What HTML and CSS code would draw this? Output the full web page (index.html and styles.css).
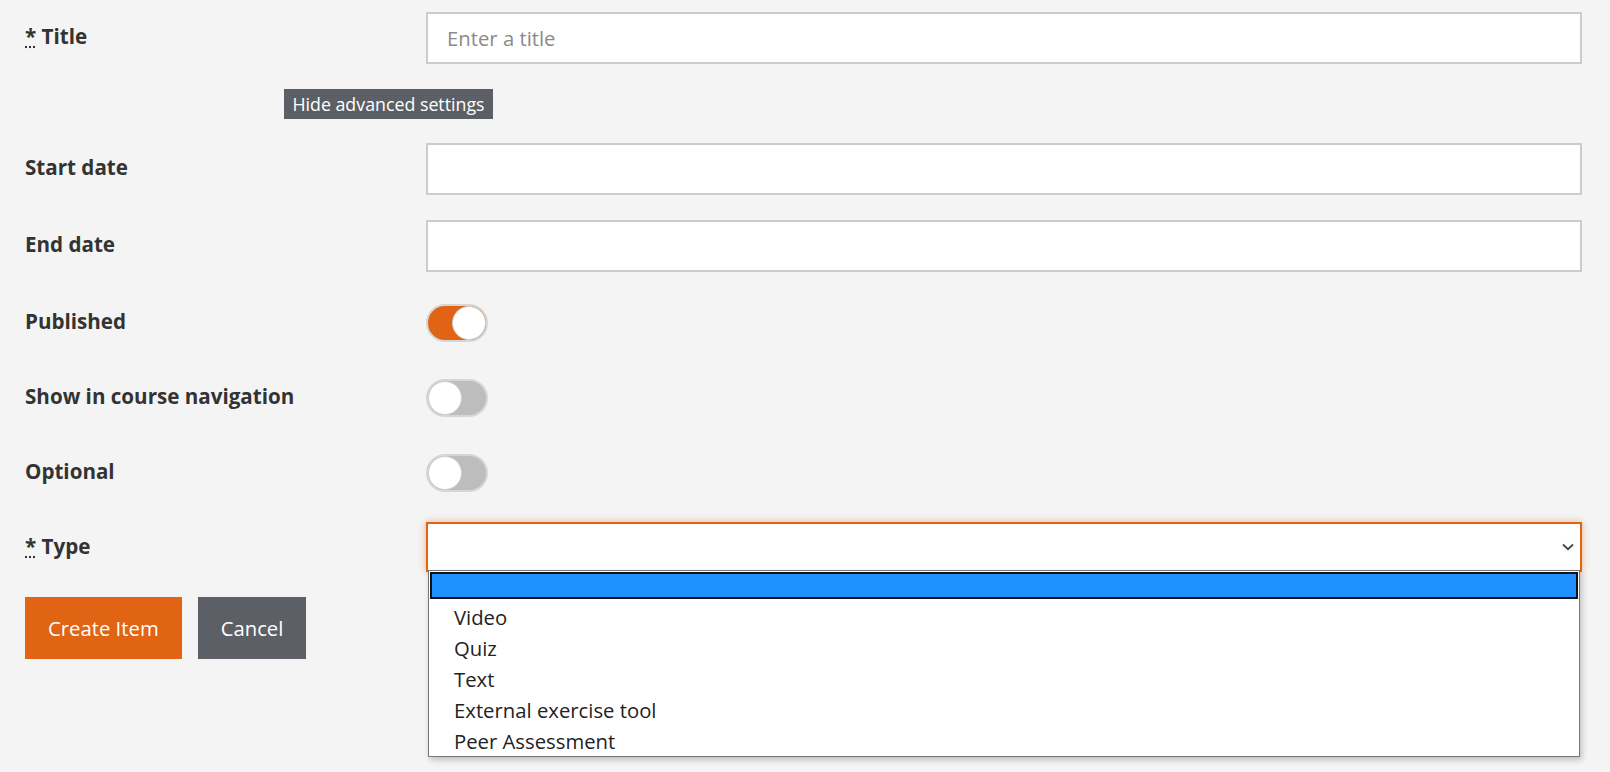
FILE: index.html
```html
<!DOCTYPE html>
<html lang="en">
<head>
<meta charset="utf-8">
<title>New item</title>
<link rel="stylesheet" href="styles.css">
</head>
<body>
<form class="item-form">
  <div class="form-row">
    <label class="form-label" for="title"><abbr title="required">*</abbr> Title</label>
    <div class="form-field">
      <input class="text-input" id="title" type="text" placeholder="Enter a title">
    </div>
  </div>

  <div class="advanced-row">
    <button type="button" class="btn-advanced">Hide advanced settings</button>
  </div>

  <div class="form-row">
    <label class="form-label" for="start">Start date</label>
    <div class="form-field">
      <input class="text-input" id="start" type="text">
    </div>
  </div>

  <div class="form-row">
    <label class="form-label" for="end">End date</label>
    <div class="form-field">
      <input class="text-input" id="end" type="text">
    </div>
  </div>

  <div class="form-row toggle-row">
    <span class="form-label">Published</span>
    <div class="form-field">
      <span class="toggle on"><span class="knob"></span></span>
    </div>
  </div>

  <div class="form-row toggle-row">
    <span class="form-label">Show in course navigation</span>
    <div class="form-field">
      <span class="toggle"><span class="knob"></span></span>
    </div>
  </div>

  <div class="form-row toggle-row">
    <span class="form-label">Optional</span>
    <div class="form-field">
      <span class="toggle"><span class="knob"></span></span>
    </div>
  </div>

  <div class="form-row">
    <span class="form-label"><abbr title="required">*</abbr> Type</span>
    <div class="form-field">
      <div class="select">
        <span class="select-value"></span>
        <svg class="chevron" width="12" height="8" viewBox="0 0 12 8" aria-hidden="true">
          <path d="M1 1.5 L6 6.2 L11 1.5" fill="none" stroke="#444" stroke-width="1.8"/>
        </svg>
        <ul class="options">
          <li class="option selected"></li>
          <li class="option">Video</li>
          <li class="option">Quiz</li>
          <li class="option">Text</li>
          <li class="option">External exercise tool</li>
          <li class="option">Peer Assessment</li>
        </ul>
      </div>
    </div>
  </div>

  <div class="actions">
    <button type="submit" class="btn btn-primary">Create Item</button>
    <button type="button" class="btn btn-secondary">Cancel</button>
  </div>
</form>
</body>
</html>
```

FILE: styles.css
```css
* { box-sizing: border-box; }

html, body {
  margin: 0;
  height: 100%;
}

body {
  background: #f4f4f4;
  color: #333;
  font-family: "Open Sans", "Noto Sans", "DejaVu Sans", sans-serif;
  font-size: 20.3px;
  padding: 12px 28px 0 25px;
  overflow: hidden;
}

.form-row {
  display: flex;
  align-items: flex-start;
  margin-bottom: 25px;
}

.form-label {
  flex: none;
  width: 401px;
  font-weight: 700;
  font-size: 20.6px;
  line-height: 28px;
  padding-top: 9.5px;
}

abbr {
  text-decoration: underline dotted;
  text-underline-offset: 3px;
  cursor: help;
}

.form-field {
  flex: 1;
  min-width: 0;
}

.text-input {
  display: block;
  width: 100%;
  height: 52px;
  border: 2px solid #cccccc;
  background: #fff;
  padding: 0 19px;
  font: inherit;
  font-weight: 400;
  color: #333;
  outline: none;
}

.text-input::placeholder {
  color: #8a8a8a;
}

.advanced-row {
  display: flex;
  padding-left: 259px;
  margin-bottom: 24px;
}

.btn-advanced {
  height: 30px;
  width: 209px;
  border: 0;
  background: #5c6066;
  color: #fff;
  font-family: inherit;
  font-size: 17.8px;
  padding: 0;
  cursor: pointer;
}

.toggle-row {
  height: 50px;
}

.toggle-row .form-field {
  padding-top: 7px;
}

.toggle {
  display: inline-flex;
  align-items: center;
  width: 62px;
  height: 38px;
  border: 2px solid #d6d6d6;
  border-radius: 19px;
  background: #bdbdbd;
  padding: 0;
}

.toggle .knob {
  width: 34px;
  height: 34px;
  border-radius: 50%;
  background: #fff;
  border: 1px solid #d0d0d0;
}

.toggle.on {
  background: #e06414;
  justify-content: flex-end;
}

.select {
  position: relative;
  display: flex;
  align-items: center;
  justify-content: flex-end;
  height: 50px;
  border: 2px solid #e06414;
  background: #fff;
  box-shadow: 0 0 7px rgba(224, 100, 20, 0.45);
  padding-right: 6px;
}

.select-value {
  flex: 1;
}

.options {
  position: absolute;
  top: 100%;
  left: 0;
  right: 0;
  margin: 0;
  padding: 0;
  list-style: none;
  background: #fff;
  border: 1px solid #767676;
  box-shadow: 2px 3px 6px rgba(0, 0, 0, 0.22);
  font-weight: 400;
  z-index: 5;
}

.option {
  height: 31px;
  line-height: 28px;
  padding-top: 2px;
  padding-left: 25px;
  color: #222;
  font-size: 20.3px;
  white-space: nowrap;
}

.option.selected {
  height: 27px;
  padding: 0;
  margin: 1px 1px 2px;
  background: #1e90ff;
  box-shadow: inset 0 0 0 2px #111;
}

.actions {
  display: flex;
  gap: 16px;
}

.btn {
  height: 62px;
  border: 0;
  color: #fff;
  font-family: inherit;
  font-size: 20.3px;
  padding: 0 23px;
  cursor: pointer;
}

.btn-primary {
  background: #e06414;
}

.btn-secondary {
  background: #5c6066;
}
```
